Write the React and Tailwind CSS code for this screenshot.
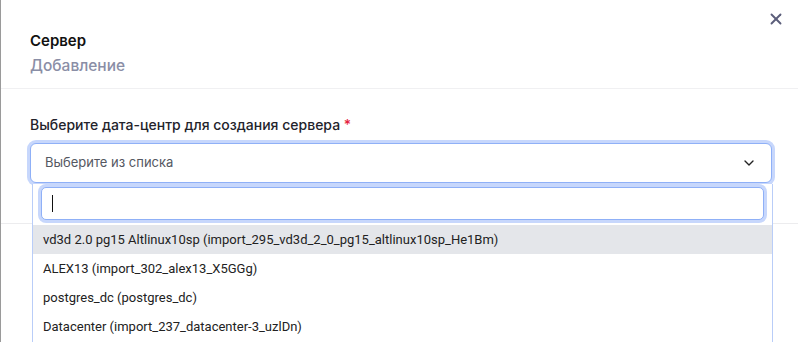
import { ChevronDown, X } from 'lucide-react';

const options = [
  'vd3d 2.0 pg15 Altlinux10sp (import_295_vd3d_2_0_pg15_altlinux10sp_He1Bm)',
  'ALEX13 (import_302_alex13_X5GGg)',
  'postgres_dc (postgres_dc)',
  'Datacenter (import_237_datacenter-3_uzlDn)',
];

export default function App() {
  return (
    <div
      className="relative h-[342px] w-[798px] overflow-hidden bg-white border-l border-[#9a9a9a]"
      style={{ fontFamily: 'Inter, "Noto Sans", sans-serif' }}
    >
      {/* Close */}
      <button className="absolute right-[13px] top-[10px] text-[#5b5e7a]">
        <X size={18} strokeWidth={2.5} />
      </button>

      {/* Header */}
      <div className="pl-[29px] pt-[30px] pb-[11px] border-b border-[#f0f0f2]">
        <div className="text-[15px] font-semibold leading-[22px] text-[#111]">Сервер</div>
        <div className="mt-[3px] text-[15.5px] font-medium leading-[22px] text-[#8a8ea6]">Добавление</div>
      </div>

      {/* Body */}
      <div className="pl-[29px] pr-[26px] pt-[26px]">
        <label className="block text-[14px] font-medium leading-[20px] text-[#23232b]">
          Выберите дата-центр для создания сервера <span className="text-[#e5213c]">*</span>
        </label>

        <div className="relative mt-[8px]">
          <div className="flex h-[40px] items-center justify-between rounded-[6px] border border-[#8fb0f7] ring-[3px] ring-[#c7d7fc] bg-white pl-[14px] pr-[14px]">
            <span className="text-[13px] text-[#555862]">Выберите из списка</span>
            <ChevronDown size={16} strokeWidth={2} className="text-[#222]" />
          </div>

          {/* Dropdown */}
          <div
            className="absolute left-[2px] right-[-1px] top-[41px] z-10 h-[200px] bg-white border-l border-[#b9cdf8] border-r border-[#5b8def]"
            style={{ fontFamily: 'Roboto, "Liberation Sans", sans-serif' }}
          >
            <div className="px-[8px] pt-[3px] pb-[5px]">
              <div className="flex h-[33px] items-center rounded-[5px] border border-[#8fb0f7] ring-[3px] ring-[#c7d7fc] bg-white px-[10px]">
                <span className="h-[17px] w-[1px] bg-[#111]" />
              </div>
            </div>
            <ul>
              {options.map((o, i) => (
                <li
                  key={o}
                  className={`flex h-[29px] items-center pl-[10px] text-[13px] text-[#222] ${
                    i === 0 ? 'bg-[#e4e6ea]' : ''
                  }`}
                >
                  {o}
                </li>
              ))}
            </ul>
          </div>
        </div>
      </div>
      <div className="mt-[40px] border-t border-[#ececee]" />
    </div>
  );
}
